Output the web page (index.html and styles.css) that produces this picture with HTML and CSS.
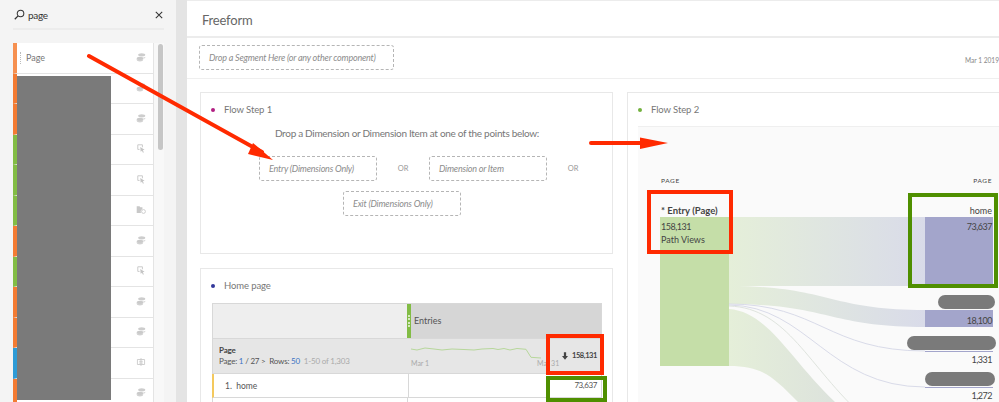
FILE: index.html
```html
<!DOCTYPE html>
<html lang="en">
<head>
<meta charset="utf-8">
<title>Freeform</title>
<link rel="stylesheet" href="styles.css">
</head>
<body>
<svg class="defs" width="0" height="0" aria-hidden="true">
  <symbol id="i-dim" viewBox="0 0 14 14">
    <ellipse cx="8" cy="4" rx="5" ry="2.4" fill="#cdcdcd"/>
    <path d="M3 6.500c1 1.600 9 1.600 10 0v1.500c-1 1.600-9 1.600-10 0z" fill="#d6d6d6"/>
    <ellipse cx="5.500" cy="9" rx="4.500" ry="2.200" fill="#cacaca"/>
    <path d="M1 9.500v1.500c0 1.500 2 2.400 4.500 2.400S10 12.500 10 11V9.500c-1 2-8 2-9 0z" fill="#d2d2d2"/>
  </symbol>
  <symbol id="i-metric" viewBox="0 0 14 14">
    <path d="M9 2.500H2.500V9H5" fill="none" stroke="#c8c8c8" stroke-width="1.300"/>
    <path d="M9 2.500V6" fill="none" stroke="#c8c8c8" stroke-width="1.300"/>
    <path d="M6 5.500l6 4-2.500.6 1.500 3-1.200.6-1.500-3-1.800 1.500z" fill="#c4c4c4"/>
  </symbol>
  <symbol id="i-folder" viewBox="0 0 14 14">
    <path d="M1 3h4l1 1.500h3V7.500a3.500 3.500 0 0 0-2 5H1z" fill="#c8c8c8"/>
    <circle cx="10.500" cy="10.500" r="2.700" fill="none" stroke="#c8c8c8" stroke-width="1.200"/>
  </symbol>
  <symbol id="i-bars" viewBox="0 0 14 14">
    <path d="M2 3.500h10M2 3.500v7h10v-7M7 1.500v11M4.500 6h5M4.500 8.500h5" fill="none" stroke="#c8c8c8" stroke-width="1.200"/>
  </symbol>
</svg>

<div class="app">
  <aside class="rail">
    <div class="search">
      <svg class="search-icon" viewBox="0 0 14 14" aria-hidden="true"><circle cx="8.300" cy="5.700" r="4.200" fill="none" stroke="#333" stroke-width="1.300"/><path d="M5.200 8.800L1 13" stroke="#333" stroke-width="1.600"/></svg>
      <span class="search-text">page</span>
      <svg class="search-close" viewBox="0 0 10 10" aria-hidden="true"><path d="M1 1l8 8M9 1l-8 8" stroke="#333" stroke-width="1.300"/></svg>
    </div>
    <div class="list-wrap">
      <ul class="list">
        <li class="row orange first"><span class="grip"></span><span class="row-label">Page</span><svg class="row-icon"><use href="#i-dim"/></svg></li>
        <li class="row orange"><svg class="row-icon"><use href="#i-dim"/></svg></li>
        <li class="row orange"><svg class="row-icon"><use href="#i-dim"/></svg></li>
        <li class="row green"><svg class="row-icon"><use href="#i-metric"/></svg></li>
        <li class="row green"><svg class="row-icon"><use href="#i-metric"/></svg></li>
        <li class="row green"><svg class="row-icon"><use href="#i-folder"/></svg></li>
        <li class="row orange"><svg class="row-icon"><use href="#i-dim"/></svg></li>
        <li class="row green"><svg class="row-icon"><use href="#i-metric"/></svg></li>
        <li class="row orange"><svg class="row-icon"><use href="#i-dim"/></svg></li>
        <li class="row orange"><svg class="row-icon"><use href="#i-dim"/></svg></li>
        <li class="row blue"><svg class="row-icon"><use href="#i-bars"/></svg></li>
        <li class="row orange"><svg class="row-icon"><use href="#i-dim"/></svg></li>
      </ul>
      <div class="scrollbar"><div class="thumb"></div></div>
      <div class="redact-list"></div>
    </div>
  </aside>
  <div class="gutter"></div>
  <main class="main">
    <header class="title">Freeform</header>
    <div class="segment-bar">
      <div class="drop drop-segment">Drop a Segment Here (or any other component)</div>
      <span class="date">Mar 1 2019</span>
    </div>
    <div class="panels">
      <div class="col-left">
        <section class="card step1">
          <h2 class="card-title"><i class="dot dot-pink"></i>Flow Step 1</h2>
          <p class="instruction">Drop a Dimension or Dimension Item at one of the points below:</p>
          <div class="drop-row">
            <div class="drop drop-main">Entry (Dimensions Only)</div>
            <span class="or">OR</span>
            <div class="drop drop-main">Dimension or Item</div>
            <span class="or">OR</span>
          </div>
          <div class="drop-row-2"><div class="drop drop-main">Exit (Dimensions Only)</div></div>
        </section>
        <section class="card home">
          <h2 class="card-title"><i class="dot dot-blue"></i>Home page</h2>
          <div class="table">
            <div class="thead">
              <div class="th-left"></div>
              <div class="th-handle"><span class="handle-dots"></span></div>
              <div class="th-right">Entries</div>
            </div>
            <div class="totals">
              <div class="tot-left">
                <div class="tot-name">Page</div>
                <div class="tot-meta">Page: <b>1</b> / 27 &gt;&nbsp; Rows: <b>50</b> <span>1-50 of 1,303</span></div>
              </div>
              <div class="tot-right">
                <svg class="spark" viewBox="0 0 146 20" preserveAspectRatio="none" aria-hidden="true"><path d="M0 6l6 1 8-2 9 1 8 1 10-1 12 .5 10 .5 8-1 11-.5 5 1 6-1 6 1.500 7-1.500 9 .8 5 8 10 .7" fill="none" stroke="#b7d79b" stroke-width="1"/></svg>
                <span class="axis axis-a">Mar 1</span><span class="axis axis-b">Mar 31</span>
                <span class="tot-value"><svg class="down" viewBox="0 0 8 10" aria-hidden="true"><path d="M2.500 0h3v5H8L4 10 0 5h2.500z" fill="#444"/></svg>158,131</span>
              </div>
            </div>
            <div class="trow first-row">
              <div class="td-left">1.&nbsp; home</div>
              <div class="td-right">73,637</div>
            </div>
            <div class="trow"><div class="td-left"></div><div class="td-right"></div></div>
          </div>
        </section>
      </div>
      <section class="card step2">
        <h2 class="card-title"><i class="dot dot-green"></i>Flow Step 2</h2>
        <div class="flow">
          <svg class="flow-svg" viewBox="0 0 361 275" aria-hidden="true">
            <defs>
              <linearGradient id="ribbon" gradientUnits="userSpaceOnUse" x1="91" x2="287" y1="0" y2="0">
                <stop offset="0" stop-color="#e5efd9"/>
                <stop offset="1" stop-color="#d9dbe9"/>
              </linearGradient>
              <linearGradient id="ribbon-low" gradientUnits="userSpaceOnUse" x1="91" x2="190" y1="0" y2="0">
                <stop offset="0" stop-color="#e5efd9"/>
                <stop offset="1" stop-color="#dde3dc"/>
              </linearGradient>
            </defs>
            <rect x="91" y="90" width="196" height="69" fill="url(#ribbon)"/>
            <path d="M91 159C190 159 190 183 287 183V200C190 200 190 177 91 177Z" fill="url(#ribbon)"/>
            <path d="M91 177C180 177 190 224 287 224" fill="none" stroke="#d9dbe9" stroke-width="1"/>
            <path d="M91 178C170 179 190 260 287 260" fill="none" stroke="#d9dbe9" stroke-width="1"/>
            <path d="M91 179C150 181 170 240 226 290" fill="none" stroke="#dfe4de" stroke-width="1"/>
            <path d="M91 182C130 185 150 230 197 275H160C135 250 125 239 91 239Z" fill="url(#ribbon-low)"/>
            <rect x="22" y="90" width="69" height="149" fill="#c5dea8"/>
            <rect x="287" y="90" width="68" height="69" fill="#a3a5cb"/>
            <rect x="287" y="183" width="68" height="17" fill="#a3a5cb"/>
            <rect x="287" y="224" width="68" height="1" fill="#a3a5cb"/>
            <rect x="287" y="260" width="68" height="1" fill="#a3a5cb"/>
            <text class="flow-cap" x="23" y="56">PAGE</text>
            <text class="flow-cap end" x="354" y="56">PAGE</text>
            <text class="flow-strong" x="23" y="87">* Entry (Page)</text>
            <text class="flow-text flow-num" x="23" y="103">158,131</text>
            <text class="flow-text" x="23" y="116">Path Views</text>
            <text class="flow-text end" x="354" y="87">home</text>
            <text class="flow-text flow-num end" x="354" y="103">73,637</text>
            <text class="flow-text flow-num end" x="354" y="197">18,100</text>
            <text class="flow-text flow-num end" x="354" y="236">1,331</text>
            <text class="flow-text flow-num end" x="354" y="272">1,272</text>
          </svg>
        </div>
      </section>
    </div>
  </main>
</div>

<div class="pill pill-a"></div>
<div class="pill pill-b"></div>
<div class="pill pill-c"></div>
<div class="mark red mark-flow-entry"></div>
<div class="mark green-mark mark-flow-home"></div>
<div class="mark red mark-total"></div>
<div class="mark green-mark mark-row"></div>
<svg class="arrows" viewBox="0 0 999 402" aria-hidden="true">
  <path d="M89 56L262 152" stroke="#ff2a00" stroke-width="4" stroke-linecap="round" fill="none"/>
  <path d="M273 160L248 154L253 143Z" fill="#ff2a00"/>
  <path d="M591 143H642" stroke="#ff2a00" stroke-width="4" stroke-linecap="round" fill="none"/>
  <path d="M640 137.500L668 143L640 149Z" fill="#ff2a00"/>
</svg>
</body>
</html>
```
FILE: styles.css
```css
* { box-sizing: border-box; }
html, body { margin: 0; padding: 0; }
body {
  width: 999px;
  height: 402px;
  overflow: hidden;
  position: relative;
  background: #fff;
  font-family: "Lato", "Open Sans", sans-serif;
  color: #666;
}
.defs { position: absolute; }
.app { display: flex; width: 999px; height: 402px; overflow: hidden; }

/* left rail */
.rail { width: 176px; flex: none; background: #f4f4f4; padding: 0 12px 0 13px; }
.search { height: 30px; display: flex; align-items: center; border-bottom: 2px solid #ececec; padding: 1px 0 0 1px; }
.search-icon { width: 11px; height: 11px; flex: none; margin-right: 3px; }
.search-text { font-size: 10px; letter-spacing: -.3px; color: #333; flex: 1; }
.search-close { width: 8px; height: 8px; flex: none; margin-right: 1px; }
.list-wrap { position: relative; margin-top: 13px; display: flex; }
.list { list-style: none; margin: 0; padding: 0; width: 141px; flex: none; }
.row { height: 30.500px; background: #fff; border-bottom: 1px solid #e4e4e4; border-right: 1px solid #e4e4e4; border-left: 4px solid #f37b33; display: flex; align-items: center; padding-right: 7px; font-size: 9px; color: #777; }
.row.green { border-left-color: #82bc45; }
.row.blue { border-left-color: #2e9bd6; }
.row.first { border-left-color: #f69050; }
.grip { width: 1px; height: 12px; margin-left: 3px; border-left: 1px dotted #bbb; }
.row-label { margin-left: 5px; }
.row-icon { width: 10px; height: 10px; margin: 0 0 2px auto; }
.scrollbar { width: 10px; background: #f8f8f8; height: 360px; padding: 1px 3px 0 4px; }
.thumb { width: 5px; height: 106px; background: #c6c6c6; border-radius: 3px; }
.redact-list { position: absolute; left: 4px; top: 33px; width: 94px; height: 324px; background: #7a7a7a; }

.gutter { width: 11px; flex: none; background: #e4e4e4; }

/* main */
.main { flex: 1; min-width: 0; background: #fff; border-top: 1px solid #ececec; }
.title { height: 37px; border-bottom: 2px solid #ececec; padding: 10px 0 0 15px; font-size: 13px; letter-spacing: -.2px; line-height: 18px; color: #666; }
.segment-bar { height: 41px; border-bottom: 1px solid #efefef; display: flex; align-items: center; padding: 0 0 2px 12px; }
.drop { border: 1px dashed #b5b5b5; border-radius: 3px; font-style: italic; font-size: 9px; letter-spacing: -.2px; color: #8c8c8c; display: flex; align-items: center; white-space: nowrap; }
.drop-segment { width: 195px; height: 25px; padding-left: 9px; }
.date { margin-left: auto; font-size: 6.600px; color: #888; padding-top: 6px; white-space: nowrap; }

.panels { display: flex; align-items: flex-start; gap: 14px; padding: 13px 0 0 13px; }
.col-left { width: 413px; flex: none; display: flex; flex-direction: column; gap: 14px; }
.card { border: 1px solid #e8e8e8; background: #fff; }
.card-title { margin: 0; padding-top: 10px; font-size: 9.500px; letter-spacing: -.1px; font-weight: 400; color: #777; display: flex; align-items: center; line-height: 13px; }
.dot { width: 4px; height: 4px; border-radius: 50%; margin: 0 9px 0 10px; flex: none; }
.dot-pink { background: #b21f82; }
.dot-blue { background: #33389b; }
.dot-green { background: #73b13e; }

.step1 { height: 162px; }
.instruction { margin: 10px 0 0; text-align: center; font-size: 10px; letter-spacing: -.3px; line-height: 15px; color: #777; padding-left: 1px; }
.drop-row { display: flex; align-items: center; margin: 15px 0 0 58px; }
.drop-main { width: 118px; height: 25px; padding-left: 9px; }
.or { width: 52px; text-align: center; font-size: 7.500px; color: #999; }
.drop-row-2 { margin: 10px 0 0 142px; }

.home { height: 200px; padding: 0; }
.table { margin: 11px 10px 0 11px; border: 1px solid #d8d8d8; border-bottom: 0; }
.thead { display: flex; height: 34px; }
.th-left { width: 194px; background: #eee; }
.th-handle { width: 4px; background: #82bc45; display: flex; justify-content: center; align-items: center; }
.handle-dots { width: 2px; height: 12px; border-left: 2px dotted #d6eabf; }
.th-right { flex: 1; background: #d6d6d6; font-size: 9px; color: #555; display: flex; align-items: center; padding: 0 0 2px 3px; }
.totals { display: flex; height: 36px; background: #e6e6e6; border-top: 1px solid #d8d8d8; border-bottom: 1px solid #d8d8d8; }
.tot-left { width: 194px; padding: 6px 0 0 6px; font-size: 8px; letter-spacing: -.2px; line-height: 11px; }
.tot-name { font-weight: 700; color: #444; }
.tot-meta { color: #555; white-space: nowrap; }
.tot-meta b { color: #3b73c4; font-weight: 400; }
.tot-meta span { color: #aaa; margin-left: 2px; }
.tot-right { flex: 1; position: relative; }
.spark { position: absolute; left: 4px; top: 4px; width: 146px; height: 20px; }
.axis { position: absolute; top: 20px; font-size: 7px; color: #aaa; }
.axis-a { left: 4px; }
.axis-b { left: 130px; }
.tot-value { position: absolute; right: 4px; top: 12px; font-size: 7.500px; letter-spacing: -.4px; font-weight: 700; color: #444; display: flex; align-items: center; gap: 4px; }
.down { width: 6px; height: 8px; }
.trow { display: flex; height: 24px; border-bottom: 1px solid #d8d8d8; background: #fff; }
.first-row { border-left: 2px solid #f4c95d; margin-left: -1px; }
.td-left { width: 195px; border-right: 1px solid #d8d8d8; font-size: 8.500px; color: #555; display: flex; align-items: center; padding-left: 11px; }
.td-right { flex: 1; text-align: right; padding: 6px 4px 0 0; font-size: 8px; letter-spacing: -.4px; line-height: 11px; color: #555; }

.step2 { flex: 1; height: 330px; margin-right: -4px; }
.flow { margin: 10px 0 0 10px; background: #fafafa; border-top: 1px solid #efefef; height: 290px; }
.flow-svg { display: block; width: 361px; height: 275px; }
.flow-cap { font-size: 6.500px; letter-spacing: .6px; fill: #444; }
.flow-strong { font-size: 9.500px; font-weight: 700; fill: #444; }
.flow-text { font-size: 9px; fill: #444; }
.flow-num { letter-spacing: -.5px; }
.end { text-anchor: end; }

/* overlays */
.mark { position: absolute; border-width: 4px; border-style: solid; }
.red { border-color: #ff2a00; }
.green-mark { border-color: #4f8f00; }
.mark-flow-entry { left: 647px; top: 190px; width: 86px; height: 64px; }
.mark-flow-home { left: 908px; top: 193px; width: 90px; height: 95px; }
.mark-total { left: 546px; top: 334px; width: 58px; height: 41px; }
.mark-row { left: 546px; top: 376px; width: 61px; height: 26px; }
.pill { position: absolute; background: #7a7a7a; border-radius: 7px; height: 14px; }
.pill-a { left: 938px; top: 295px; width: 57px; }
.pill-b { left: 907px; top: 336px; width: 89px; }
.pill-c { left: 925px; top: 372px; width: 70px; }
.arrows { position: absolute; left: 0; top: 0; width: 999px; height: 402px; pointer-events: none; }
```
